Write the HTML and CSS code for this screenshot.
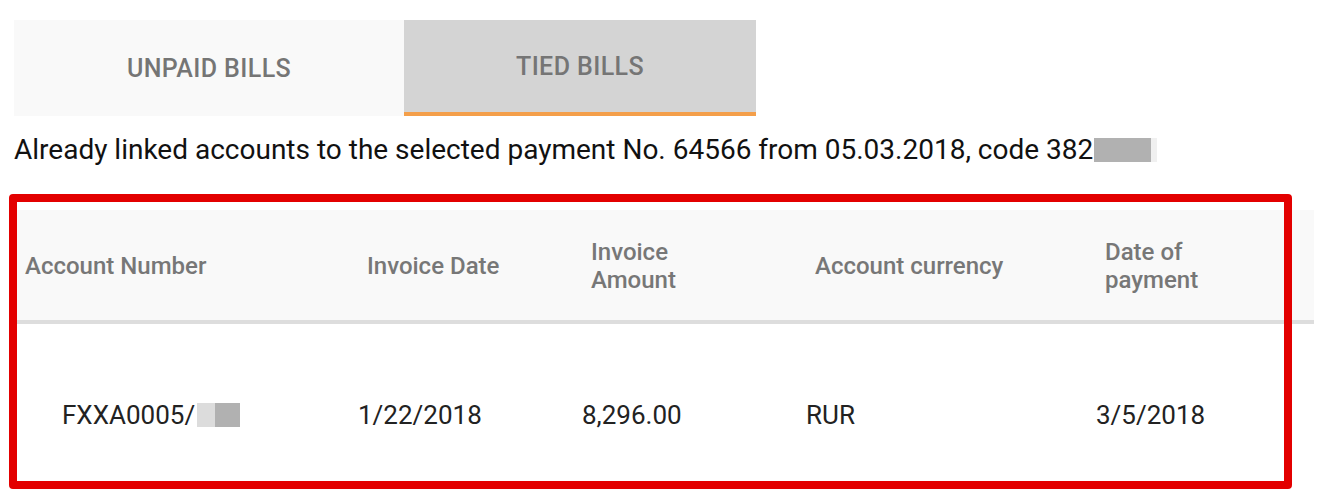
FILE: index.html
```html
<!DOCTYPE html>
<html lang="en">
<head>
<meta charset="utf-8">
<title>Tied bills</title>
<link rel="stylesheet" href="styles.css">
</head>
<body>
<div class="page">
  <div class="tabs">
    <div class="tab tab-unpaid">UNPAID BILLS</div>
    <div class="tab tab-tied active">TIED BILLS</div>
  </div>
  <p class="info">Already linked accounts to the selected payment No. 64566 from 05.03.2018, code 382<span class="redact redact-code"><span class="r-dark"></span><span class="r-light"></span></span></p>
  <div class="table-wrap">
    <table class="bills">
      <colgroup>
        <col class="c1"><col class="c2"><col class="c3"><col class="c4"><col class="c5">
      </colgroup>
      <thead>
        <tr>
          <th class="h1">Account Number</th>
          <th>Invoice Date</th>
          <th><span class="narrow">Invoice Amount</span></th>
          <th>Account currency</th>
          <th><span class="narrow">Date of payment</span></th>
        </tr>
      </thead>
      <tbody>
        <tr>
          <td class="d1">FXXA0005/<span class="redact redact-acc"><span class="r-light2"></span><span class="r-dark"></span></span></td>
          <td>1/22/2018</td>
          <td>8,296.00</td>
          <td>RUR</td>
          <td>3/5/2018</td>
        </tr>
      </tbody>
    </table>
    <div class="highlight"></div>
  </div>
</div>
</body>
</html>
```

FILE: styles.css
```css
html, body {
  margin: 0;
  padding: 0;
  background: #ffffff;
}

body {
  font-family: Roboto, "Liberation Sans", Arial, sans-serif;
  width: 1336px;
  height: 496px;
  overflow: hidden;
}

.page {
  padding: 20px 0 0 14px;
}

.tabs {
  display: flex;
}

.tab {
  height: 96px;
  box-sizing: border-box;
  display: flex;
  align-items: center;
  justify-content: center;
  font-size: 25px;
  font-weight: 500;
  color: #757575;
  letter-spacing: 0.4px;
}

.tab-unpaid {
  width: 390px;
  background: #f9f9f9;
}

.tab-tied {
  width: 352px;
  background: #d4d4d4;
  border-bottom: 4px solid #f49f4a;
}

.info {
  margin: 15px 0 0 0;
  font-size: 28px;
  line-height: 38px;
  color: #111111;
}

.redact {
  display: inline-flex;
  vertical-align: -3px;
  height: 24px;
}

.redact-code {
  margin-left: 1px;
}

.redact-code .r-dark {
  width: 57px;
  background: #b1b1b1;
}

.redact-code .r-light {
  width: 6px;
  background: #f0f0f0;
}

.redact-acc {
  margin-left: 2px;
}

.redact-acc .r-light2 {
  width: 18px;
  background: #dcdcdc;
}

.redact-acc .r-dark {
  width: 25px;
  background: #b1b1b1;
}

.table-wrap {
  position: relative;
  margin-top: 41px;
}

.bills {
  border-collapse: collapse;
  table-layout: fixed;
  width: 1300px;
}

.c1 { width: 334px; }
.c2 { width: 224px; }
.c3 { width: 224px; }
.c4 { width: 290px; }
.c5 { width: 228px; }

.bills thead tr {
  background: #f9f9f9;
}

.bills th {
  height: 112px;
  padding: 2px 10px 0 19px;
  text-align: left;
  font-size: 24px;
  font-weight: 500;
  line-height: 28px;
  color: #777777;
  border-bottom: 4px solid #dddddd;
  box-sizing: border-box;
}

.bills th.h1 {
  padding-left: 11px;
}

.narrow {
  display: inline-block;
  max-width: 110px;
}

.bills td {
  height: 182px;
  padding: 0 10px 0 10px;
  font-size: 26px;
  color: #222222;
  vertical-align: middle;
}

.bills td.d1 {
  padding-left: 48px;
}

.highlight {
  position: absolute;
  left: -5px;
  top: -16px;
  width: 1283px;
  height: 295px;
  box-sizing: border-box;
  border: 8px solid #e30000;
  border-radius: 4px;
  pointer-events: none;
}
```
